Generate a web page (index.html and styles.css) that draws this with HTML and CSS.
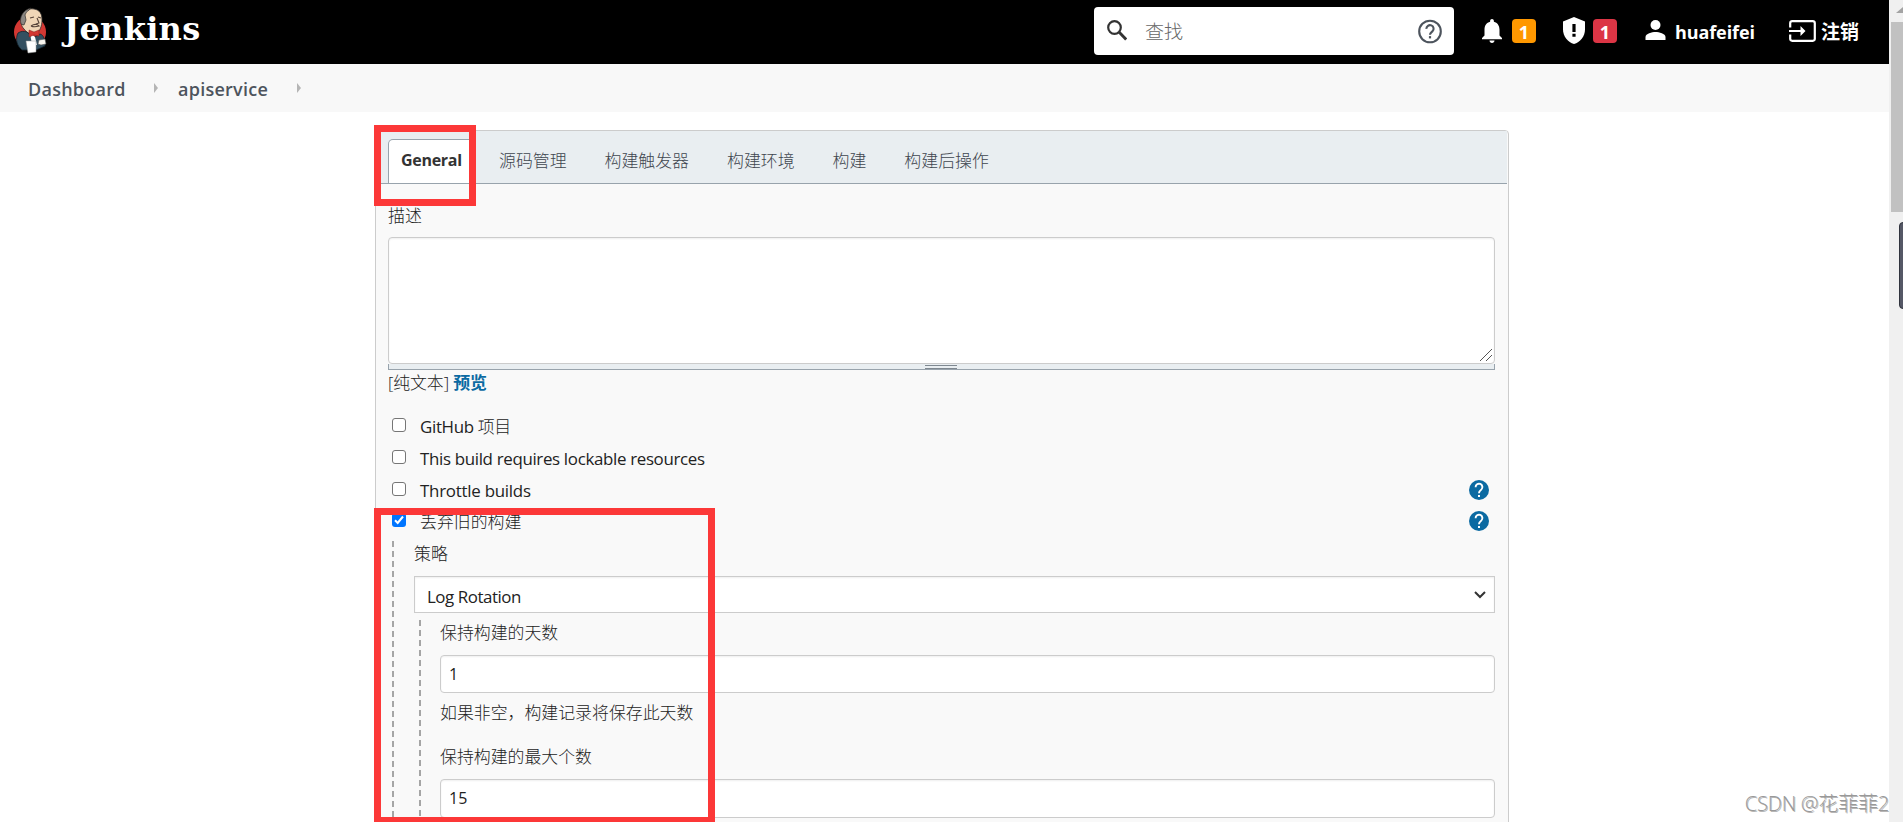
FILE: index.html
```html
<!DOCTYPE html>
<html lang="zh-CN">
<head>
<meta charset="utf-8">
<title>apiservice Config [Jenkins]</title>
<link rel="stylesheet" href="styles.css">
</head>
<body>
<svg class="defs" width="0" height="0">
  <symbol id="help" viewBox="0 0 20 20">
    <circle cx="10" cy="10" r="10" fill="#0b6aa2"/>
    <path d="M6.6 7.2a3.4 3.4 0 1 1 5.7 2.4C11 10.8 10 11.300 10 13.200" fill="none" stroke="#fff" stroke-width="1.9"/>
    <path d="M9 14.900h2v2H9z" fill="#fff"/>
  </symbol>
</svg>
<div class="window">
  <div class="page">
    <header class="header">
      <a class="logo">
        <svg class="butler" width="34" height="48" viewBox="0 0 34 48">
          <circle cx="17" cy="25" r="16" fill="#d33833"/>
          <path d="M9 11C11 4 15 1 21 2c6 1 8 5 8 11 0 6-2 11-6 14-5 1-9-1-12-5-3-3-3-7-2-11z" fill="#f0d6b7" stroke="#33302e" stroke-width=".8"/>
          <path d="M8 17C6 10 10 3 18 1c-2 3-5 3-6 7l1 5-2 5z" fill="#8b8782" stroke="#33302e" stroke-width=".7"/>
          <path d="M5 26c3-2 6-2 9-1l6 6 7-4c4 1 5 6 5 12l-9 4H9c-5-4-7-11-4-17z" fill="#335061" stroke="#14242e" stroke-width=".8"/>
          <path d="M17 26l5 4 2 8h-5z" fill="#fff"/>
          <path d="M16 23l5 2 5-2v6l-5-1-5 2z" fill="#d33833" stroke="#81201c" stroke-width=".5"/>
          <path d="M17 11l4-1m4 0l3 1m-4 0l2 5-3 1m-5 2c3-2 6-2 8 0-3 1-6 1-8 0" fill="none" stroke="#554238" stroke-width="1.100"/>
          <path d="M13 34h10v11l-8 1z" fill="#fff" stroke="#999" stroke-width=".5"/>
          <path d="M26 33l6-1 1 5-5 1-3-1z" fill="#f7f4ee" stroke="#555" stroke-width=".6"/>
        </svg>
        <span class="wordmark">Jenkins</span>
      </a>
      <div class="search">
        <svg class="search-icon" width="20" height="21" viewBox="0 0 20 21" fill="none" stroke="#333" stroke-width="2.200"><circle cx="7.500" cy="7.500" r="6.300"/><path d="M12 12l7.200 7.600" stroke-width="2.900"/></svg>
        <span class="placeholder">查找</span>
        <svg width="24" height="25" viewBox="0 0 24 24" fill="none" stroke="#4d545d" stroke-width="2.100"><circle cx="12" cy="12" r="10.800"/><path d="M8.400 9.400a3.600 3.600 0 1 1 6 2.500C13 13.200 12 13.600 12 15.300"/><path d="M10.900 16.600h2.200v2.300h-2.200z" fill="#4d545d" stroke="none"/></svg>
      </div>
      <div class="alert bell">
        <svg width="20" height="24" viewBox="4 2.500 16 19.500" preserveAspectRatio="none" fill="#fff"><path d="M12 22c1.100 0 2-.9 2-2h-4c0 1.100.89 2 2 2zm6-6v-5c0-3.070-1.640-5.640-4.500-6.320V4c0-.83-.67-1.500-1.500-1.500s-1.500.67-1.500 1.500v.68C7.630 5.360 6 7.920 6 11v5l-2 2v1h16v-1l-2-2z"/></svg>
        <span class="badge warn">1</span>
      </div>
      <div class="alert shield">
        <svg width="22" height="27" viewBox="0 0 22 27"><path d="M11 0L22 4.500v8C22 19.500 17 25.300 11 27 5 25.300 0 19.500 0 12.500v-8z" fill="#fff"/><path d="M9.400 7h3.200v8H9.400zm0 9.800h3.200v3H9.400z" fill="#000"/></svg>
        <span class="badge danger">1</span>
      </div>
      <div class="user">
        <svg width="21" height="20" viewBox="0 0 21 20" fill="#fff"><circle cx="10.500" cy="5" r="5"/><path d="M.5 20v-3c0-3.300 6.500-5 10-5s10 1.700 10 5v3z"/></svg>
        <span class="user-name">huafeifei</span>
      </div>
      <div class="logout">
        <svg width="27" height="22" viewBox="0 0 27 22"><path d="M1.200 7.400V3a2 2 0 0 1 2-1.800h20.600a2 2 0 0 1 2 1.800v16a2 2 0 0 1-2 1.800H3.200a2 2 0 0 1-2-1.800v-4.400" fill="none" stroke="#fff" stroke-width="2.200"/><path d="M0 9.900h11.500V6l5 5-5 5v-3.900H0z" fill="#fff"/></svg>
        <span class="logout-text">注销</span>
      </div>
    </header>

    <nav class="crumbs">
      <a class="crumb first">Dashboard</a><i class="arrow"></i>
      <a class="crumb second">apiservice</a><i class="arrow"></i>
    </nav>

    <main class="panel">
      <div class="tabs">
        <a class="tab active">General</a>
        <a class="tab">源码管理</a>
        <a class="tab">构建触发器</a>
        <a class="tab">构建环境</a>
        <a class="tab">构建</a>
        <a class="tab">构建后操作</a>
      </div>
      <div class="form">
        <div class="label desc-label">描述</div>
        <div class="textarea"><svg width="12" height="12" viewBox="0 0 12 12" stroke="#555" stroke-width="1"><path d="M0 12L12 0M6 12l6-6"/></svg></div>
        <div class="handle"><i></i></div>
        <div class="format">[纯文本] <b>预览</b></div>

        <div class="options">
          <div class="option"><i class="check"></i><span class="t1">GitHub <span class="cjk">项目</span></span></div>
          <div class="option"><i class="check"></i><span class="t2">This build requires lockable resources</span></div>
          <div class="option"><i class="check"></i><span class="t3">Throttle builds</span><svg class="help" width="20" height="20"><use href="#help"/></svg></div>
          <div class="option last"><i class="check on"><svg width="14" height="14" viewBox="0 0 14 14" fill="none" stroke="#fff" stroke-width="2"><path d="M3 7.300l2.700 2.700L11 3.500"/></svg></i><span class="cjk">丢弃旧的构建</span><svg class="help" width="20" height="20"><use href="#help"/></svg></div>
        </div>

        <div class="group outer">
          <div class="label strategy">策略</div>
          <div class="select"><span>Log Rotation</span><svg width="12" height="8" viewBox="0 0 12 8" fill="none" stroke="#333" stroke-width="2"><path d="M1 1l5 5 5-5"/></svg></div>
          <div class="group inner">
            <div class="label days">保持构建的天数</div>
            <div class="input">1</div>
            <div class="hint">如果非空，构建记录将保存此天数</div>
            <div class="label count">保持构建的最大个数</div>
            <div class="input tall">15</div>
          </div>
        </div>
      </div>
    </main>
  </div>
  <div class="scrollbar"><i class="up"></i><i class="thumb"></i></div>
  <div class="side-widget"></div>
  <div class="mark mark-tab"></div>
  <div class="mark mark-discard"></div>
  <div class="watermark">CSDN @花菲菲2</div>
</div>
</body>
</html>
```
FILE: styles.css
```css
* { box-sizing: border-box; }
body {
  margin: 0;
  overflow: hidden;
  background: #fff;
  color: #222;
  font: 300 16.9px/24px "Open Sans", "Noto Sans CJK SC", sans-serif;
}
.defs { position: absolute; }
svg { display: block; flex: none; }
.window { position: relative; display: flex; height: 822px; overflow: hidden; }
.page { flex: 1; height: 822px; overflow: hidden; }

.header { display: flex; align-items: flex-start; height: 64px; background: #000; color: #fff; }
.logo { display: flex; width: 1094px; padding: 7px 0 0 13px; }
.wordmark {
  margin: 0 0 0 17px;
  font: bold 32px/44px "DejaVu Serif", serif;
  letter-spacing: .3px;
}
.search {
  display: flex;
  align-items: center;
  width: 360px;
  height: 48px;
  margin-top: 7px;
  padding: 0 12px 0 13px;
  border-radius: 4px;
  background: #fff;
}
.search-icon { margin-top: -2px; }
.placeholder { flex: 1; margin: 1px 0 0 18px; font-size: 19px; color: #666; }
.alert { display: flex; align-items: center; height: 27px; margin-top: 17px; }
.bell { width: 54px; margin-left: 28px; justify-content: space-between; }
.shield { width: 54px; margin-left: 27px; justify-content: space-between; }
.badge { width: 24px; height: 24px; border-radius: 4px; text-align: center; font: bold 18px/26px "Open Sans", sans-serif; }
.warn { background: #ff9800; }
.danger { background: #dc3545; }
.user { display: flex; margin: 20px 0 0 28px; width: 144px; }
.user-name { margin: 0 0 0 9px; font-size: 18px; font-weight: 700; letter-spacing: -.1px; }
.logout { display: flex; margin-top: 20px; }
.logout-text { margin-left: 5px; font-size: 19px; font-weight: 700; }

.crumbs { display: flex; align-items: center; height: 48px; padding-left: 28px; background: #f8f8f8; color: #4d545d; font-size: 18px; font-weight: 600; letter-spacing: .25px; }
.crumb { padding-top: 1px; white-space: nowrap; }
.first { width: 126px; }
.second { width: 119px; }
.arrow { width: 0; border: solid transparent; border-width: 5px 0 5px 4px; border-left-color: #b5b5b5; margin-right: 20px; }

.panel { width: 1134px; height: 720px; margin: 18px 0 0 375px; border: 1px solid #ccc; border-radius: 4px; background: #f9f9f9; }
.tabs { display: flex; align-items: flex-end; height: 53px; margin-right: 1px; padding-left: 12px; border-bottom: 1px solid #98a3ac; background: #e9eef1; color: #3f464f; }
.tab { height: 44px; padding: 0 19px; line-height: 44px; white-space: nowrap; }
.tab.active { width: 86px; margin-right: 6px; padding: 0 0 0 12px; border: 1px solid #98a3ac; border-bottom: 0; border-radius: 5px 5px 0 0; background: #fff; color: #333; font-size: 16px; font-weight: 700; line-height: 41px; letter-spacing: -.3px; }
.form { padding: 20px 13px 0 12px; }
.label, .hint { height: 24px; }
.textarea { display: flex; align-items: flex-end; justify-content: flex-end; height: 127px; margin-top: 9px; padding: 0 2px 2px; border: 1px solid #ccc; border-radius: 4px; background: #fff; box-shadow: inset 0 1px 2px #0001; }
.handle { display: flex; justify-content: center; height: 6px; padding-top: 1px; border: 1px solid #98a3ac; border-top: 0; background: #e9eef1; }
.handle i { width: 32px; height: 4px; margin-right: 2px; border: solid #7f8890; border-width: 1px 0; }
.format { margin-top: 1px; height: 24px; white-space: nowrap; letter-spacing: -.1px; }
.format b { color: #0b6aa2; font-weight: 700; }
.options { padding: 16px 6px 0 4px; }
.option { display: flex; align-items: center; height: 32px; font-weight: 500; }
.option.last { height: 30px; }
.cjk { font-weight: 300; }
.check { width: 14px; height: 14px; margin: -5px 14px 0 0; border: 1px solid #767676; border-radius: 3px; background: #fff; }
.check.on { border: 0; background: #0075ff; }
.help { margin-left: auto; margin-top: -2px; }
.t1, .t2, .t3 { white-space: nowrap; letter-spacing: -.33px; }
.t3 { letter-spacing: -.25px; }

.group { background: repeating-linear-gradient(#a5a5a5 0 6px, transparent 6px 10px) 0 0 / 2px 100% no-repeat; }
.outer { margin: 4px 0 0 4px; padding-left: 22px; height: 290px; }
.strategy { padding-top: 1px; }
.select { display: flex; align-items: center; justify-content: space-between; height: 37px; margin: 11px 0 7px; padding: 4px 8px 0 12px; border: 1px solid #ccc; background: #fff; font-weight: 400; letter-spacing: -.45px; box-shadow: inset 0 1px 2px #0001; }
.select svg { margin-top: -4px; }
.inner { height: 210px; margin-left: 5px; padding: 1px 0 0 21px; }
.input { height: 38px; margin-top: 10px; padding: 1px 8px 0; border: 1px solid #ccc; border-radius: 4px; background: #fff; line-height: 35px; font-size: 16px; font-weight: 400; box-shadow: inset 0 1px 2px #0001; }
.input.tall { height: 39px; }
.hint { margin-top: 8px; }
.count { margin-top: 20px; }

.scrollbar { width: 14px; padding: 7px 0 0 2px; background: #f0f0f0; }
.up { display: block; width: 0; margin: 0 0 9px 5px; border: solid transparent; border-width: 0 7px 6px; border-bottom-color: #a3a3a3; }
.thumb { display: block; height: 190px; background: #c1c1c1; }
.side-widget { position: absolute; left: 1899px; top: 222px; width: 12px; height: 87px; border: 1px solid #30333d; border-radius: 4px; background: #555866; }
.mark { position: absolute; left: 374px; border: 7px solid #fc3838; }
.mark-tab { top: 125px; width: 102px; height: 81px; }
.mark-discard { top: 508px; width: 341px; height: 316px; }
.watermark { position: absolute; right: 14px; top: 792px; color: #999; font-size: 20px; letter-spacing: -.2px; white-space: nowrap; text-shadow: 1px 1px #7778; }
```
